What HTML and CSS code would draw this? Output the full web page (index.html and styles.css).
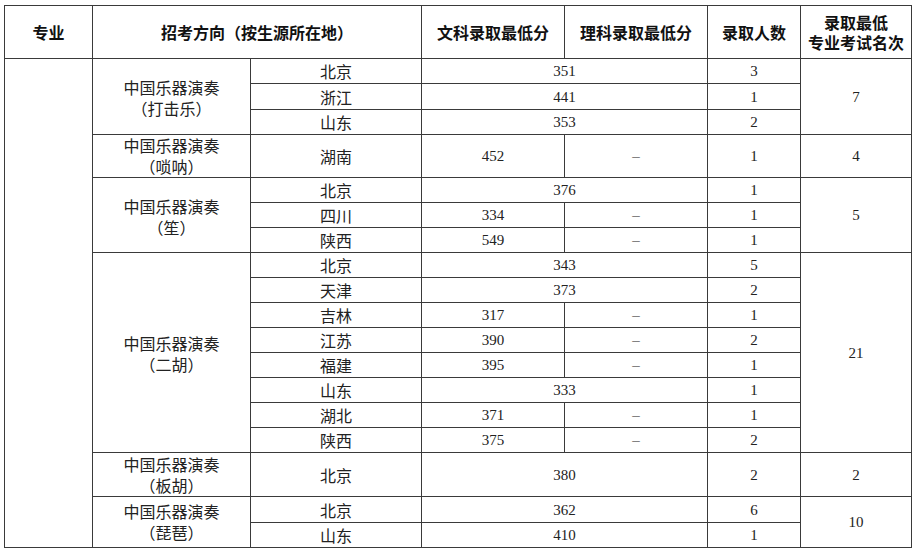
FILE: index.html
```html
<!DOCTYPE html>
<html lang="zh-CN">
<head>
<meta charset="utf-8">
<title>录取分数</title>
<link rel="stylesheet" href="styles.css">
</head>
<body>
<table class="grid">
  <colgroup>
    <col class="c-major">
    <col class="c-dir">
    <col class="c-place">
    <col class="c-wen">
    <col class="c-li">
    <col class="c-num">
    <col class="c-rank">
  </colgroup>
  <thead>
    <tr class="head">
      <th>专业</th>
      <th colspan="2">招考方向（按生源所在地）</th>
      <th>文科录取最低分</th>
      <th>理科录取最低分</th>
      <th>录取人数</th>
      <th class="two">录取最低<br>专业考试名次</th>
    </tr>
  </thead>
  <tbody>
    <tr><td rowspan="18"></td><td rowspan="3" class="dir low">中国乐器演奏<br>（打击乐）</td><td class="cn">北京</td><td colspan="2">351</td><td>3</td><td rowspan="3">7</td></tr>
    <tr class="h26"><td class="cn">浙江</td><td colspan="2">441</td><td>1</td></tr>
    <tr><td class="cn">山东</td><td colspan="2">353</td><td>2</td></tr>
    <tr class="h43"><td class="dir">中国乐器演奏<br>（唢呐）</td><td class="cn">湖南</td><td>452</td><td class="dash">–</td><td>1</td><td>4</td></tr>
    <tr><td rowspan="3" class="dir low">中国乐器演奏<br>（笙）</td><td class="cn">北京</td><td colspan="2">376</td><td>1</td><td rowspan="3">5</td></tr>
    <tr><td class="cn">四川</td><td>334</td><td class="dash">–</td><td>1</td></tr>
    <tr><td class="cn">陕西</td><td>549</td><td class="dash">–</td><td>1</td></tr>
    <tr><td rowspan="8" class="dir low">中国乐器演奏<br>（二胡）</td><td class="cn">北京</td><td colspan="2">343</td><td>5</td><td rowspan="8">21</td></tr>
    <tr><td class="cn">天津</td><td colspan="2">373</td><td>2</td></tr>
    <tr><td class="cn">吉林</td><td>317</td><td class="dash">–</td><td>1</td></tr>
    <tr><td class="cn">江苏</td><td>390</td><td class="dash">–</td><td>2</td></tr>
    <tr><td class="cn">福建</td><td>395</td><td class="dash">–</td><td>1</td></tr>
    <tr><td class="cn">山东</td><td colspan="2">333</td><td>1</td></tr>
    <tr><td class="cn">湖北</td><td>371</td><td class="dash">–</td><td>1</td></tr>
    <tr><td class="cn">陕西</td><td>375</td><td class="dash">–</td><td>2</td></tr>
    <tr class="h44"><td class="dir">中国乐器演奏<br>（板胡）</td><td class="cn">北京</td><td colspan="2">380</td><td>2</td><td>2</td></tr>
    <tr class="h26"><td rowspan="2" class="dir">中国乐器演奏<br>（琵琶）</td><td class="cn">北京</td><td colspan="2">362</td><td>6</td><td rowspan="2">10</td></tr>
    <tr><td class="cn">山东</td><td colspan="2">410</td><td>1</td></tr>
  </tbody>
</table>
</body>
</html>
```

FILE: styles.css
```css
html, body {
  margin: 0;
  padding: 0;
  background: #ffffff;
}

body {
  font-family: "Liberation Serif", "Noto Sans CJK SC", serif;
  font-size: 15px;
  color: #222222;
}

.grid {
  border-collapse: collapse;
  table-layout: fixed;
  width: 908px;
  margin: 5px 0 0 4px;
}

.c-major { width: 88px; }
.c-dir   { width: 158px; }
.c-place { width: 171px; }
.c-wen   { width: 143px; }
.c-li    { width: 143px; }
.c-num   { width: 93px; }
.c-rank  { width: 111px; }

.grid th,
.grid td {
  border: 1px solid #3a3a3a;
  padding: 0;
  text-align: center;
  vertical-align: middle;
}

.grid td {
  height: 24px;
  line-height: 18px;
}

.head th {
  height: 52px;
  font-family: "Noto Sans CJK SC", sans-serif;
  font-weight: 700;
  font-size: 16px;
  color: #111111;
  line-height: 20px;
}

.h26 td { height: 25px; }
.h43 td { height: 42px; }
.h44 td { height: 43px; }

.cn,
.dir {
  font-family: "Noto Sans CJK SC", sans-serif;
  font-weight: 400;
  font-size: 16px;
}

.grid .dir {
  line-height: 21px;
}

.grid .low {
  padding-top: 3px;
}

.dash {
  color: #666666;
}
```
